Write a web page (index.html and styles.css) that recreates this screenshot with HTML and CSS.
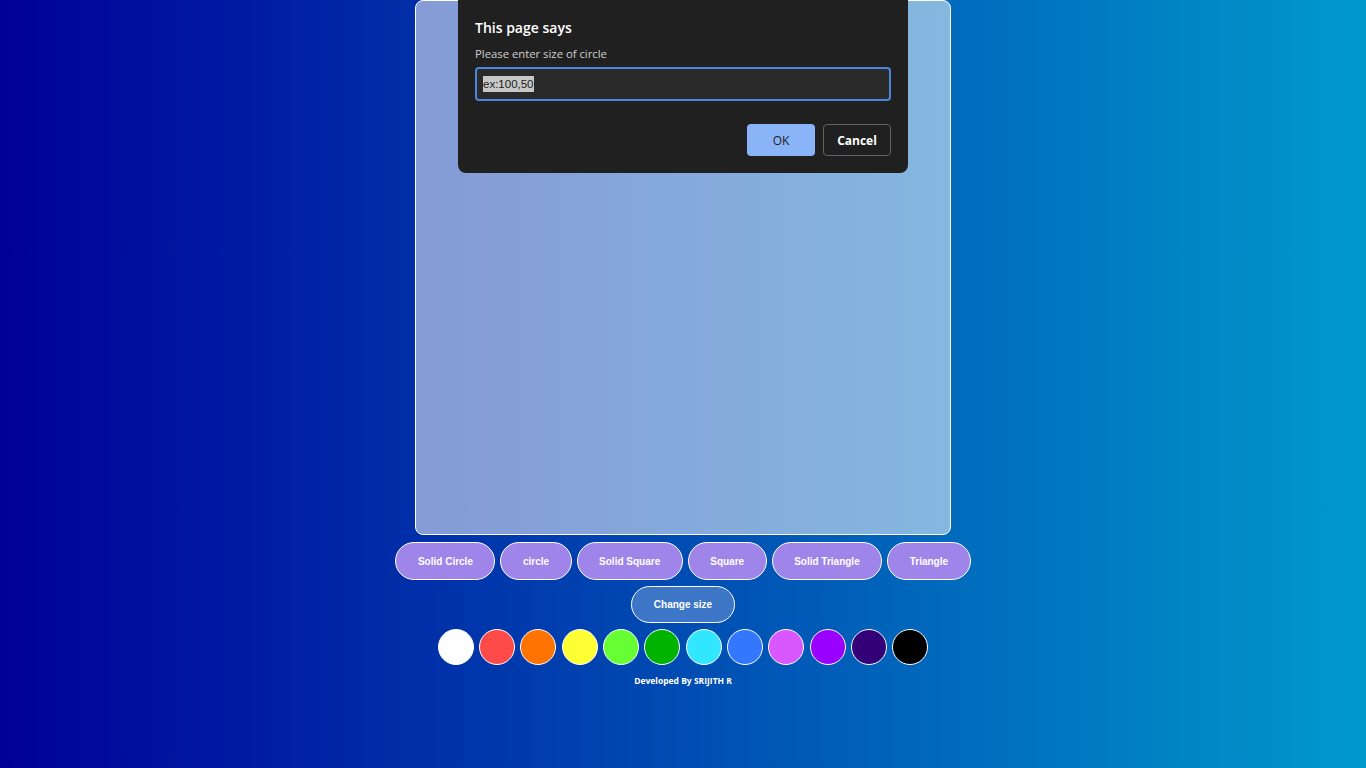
FILE: index.html
```html
<!DOCTYPE html>
<html>
<head>
<meta charset="utf-8">
<title>Shapes</title>
<link rel="stylesheet" href="styles.css">
</head>
<body>
<main class="app">
  <div class="canvas"></div>
  <div class="shape-row">
    <button class="btn">Solid Circle</button>
    <button class="btn">circle</button>
    <button class="btn">Solid Square</button>
    <button class="btn">Square</button>
    <button class="btn">Solid Triangle</button>
    <button class="btn">Triangle</button>
  </div>
  <div class="size-row">
    <button class="btn btn-size">Change size</button>
  </div>
  <div class="colors">
    <span class="swatch" style="background:#ffffff"></span>
    <span class="swatch" style="background:#ff4a4a"></span>
    <span class="swatch" style="background:#ff7300"></span>
    <span class="swatch" style="background:#ffff33"></span>
    <span class="swatch" style="background:#66ff33"></span>
    <span class="swatch" style="background:#00b300"></span>
    <span class="swatch" style="background:#33e6ff"></span>
    <span class="swatch" style="background:#3377ff"></span>
    <span class="swatch" style="background:#d957ff"></span>
    <span class="swatch" style="background:#9900ff"></span>
    <span class="swatch" style="background:#330077"></span>
    <span class="swatch" style="background:#000000"></span>
  </div>
  <p class="credit">Developed By SRIJITH R</p>
</main>

<div class="dialog">
  <h1 class="dialog-title">This page says</h1>
  <p class="dialog-msg">Please enter size of circle</p>
  <div class="dialog-input"><span class="sel">ex:100,50</span></div>
  <div class="dialog-actions">
    <button class="dbtn dbtn-ok">OK</button>
    <button class="dbtn dbtn-cancel">Cancel</button>
  </div>
</div>
</body>
</html>
```
FILE: styles.css
```css
html, body {
  margin: 0;
  padding: 0;
  height: 100%;
}
body {
  background: linear-gradient(to right, #000099, #0099cc);
  font-family: "Liberation Sans", Arial, sans-serif;
  min-height: 768px;
  overflow: hidden;
}
.app {
  display: flex;
  flex-direction: column;
  align-items: center;
}
.canvas {
  width: 534px;
  height: 533px;
  border: 1px solid #ffffff;
  border-radius: 8px;
  background: rgba(255, 255, 255, 0.52);
}
.shape-row {
  display: flex;
  gap: 5px;
  margin-top: 7px;
}
.btn {
  height: 38px;
  padding: 0 21.5px;
  border: 1px solid #ffffff;
  border-radius: 19px;
  background: #9f85ea;
  color: #ffffff;
  font-family: "Liberation Sans", Arial, sans-serif;
  font-weight: bold;
  font-size: 10px;
}
.size-row {
  margin-top: 6px;
}
.btn-size {
  height: 37px;
  padding: 0 22px;
  background: #3d76c6;
}
.colors {
  display: flex;
  gap: 5.3px;
  margin-top: 6px;
}
.swatch {
  width: 34px;
  height: 34px;
  border: 1px solid #ffffff;
  border-radius: 50%;
}
.credit {
  margin: 10px 0 0;
  color: #ffffff;
  font-family: "Open Sans", "Noto Sans", sans-serif;
  font-weight: bold;
  font-size: 8.5px;
}
.dialog {
  position: absolute;
  top: 0;
  left: 458px;
  width: 450px;
  height: 173px;
  box-sizing: border-box;
  padding: 18px 17px 0;
  background: #202020;
  border-radius: 0 0 8px 8px;
  font-family: "Open Sans", "Noto Sans", sans-serif;
}
.dialog-title {
  margin: 0;
  font-size: 14px;
  font-weight: 600;
  color: #ffffff;
  line-height: 20px;
}
.dialog-msg {
  margin: 8px 0 0;
  font-size: 11.3px;
  color: #cfcfcf;
  line-height: 16px;
}
.dialog-input {
  margin-top: 5px;
  height: 30px;
  box-sizing: content-box;
  border: 2px solid #4a86de;
  border-radius: 4px;
  background: #2a2a2a;
  display: flex;
  align-items: center;
  padding: 0 6px;
}
.sel {
  background: #c8c8c8;
  color: #1a1a1a;
  font-family: "Liberation Sans", Arial, sans-serif;
  font-size: 11.5px;
  line-height: 16px;
}
.dialog-actions {
  display: flex;
  justify-content: flex-end;
  gap: 8px;
  margin-top: 23px;
}
.dbtn {
  width: 68px;
  height: 32px;
  border-radius: 4px;
  font-family: "Open Sans", "Noto Sans", sans-serif;
  font-size: 12px;
}
.dbtn-ok {
  background: #8ab4f8;
  border: none;
  color: #202124;
}
.dbtn-cancel {
  background: #202020;
  border: 1px solid #5f6368;
  color: #ffffff;
  font-weight: bold;
}
```
